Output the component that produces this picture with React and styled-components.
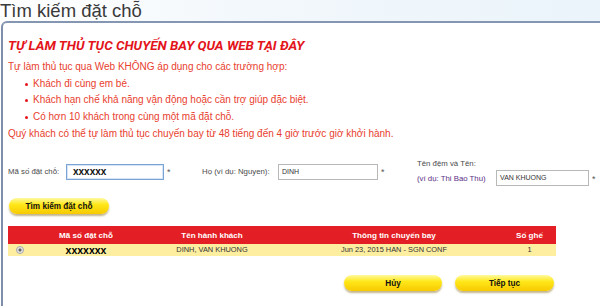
import styled, { createGlobalStyle } from "styled-components";

const GlobalStyle = createGlobalStyle`
  html, body {
    margin: 0;
    padding: 0;
    background: #ffffff;
  }
  body {
    font-family: "Liberation Sans", Arial, sans-serif;
  }
`;

const Page = styled.div`
  width: 600px;
  height: 306px;
  overflow: hidden;
  background: #ffffff;
`;

const TopBar = styled.div`
  height: 21px;
  background: linear-gradient(to right, #ffffff 0%, #f3f8fc 40%, #eaf4fa 100%);
  display: flex;
  align-items: flex-end;
`;

const PageTitle = styled.h1`
  margin: 0;
  font-family: "Liberation Sans", Arial, sans-serif;
  font-weight: normal;
  font-size: 18.5px;
  line-height: 21px;
  color: #3a3a3a;
  white-space: nowrap;
`;

const Panel = styled.div`
  margin-left: 1px;
  width: 640px;
  height: 300px;
  border-left: 2px solid #7d8fab;
  border-top: 2px solid #8596b2;
  border-top-left-radius: 6px;
  padding: 13px 0 0 5px;
  box-sizing: border-box;
`;

const RedTitle = styled.h2`
  margin: 0;
  font-family: Roboto, "Liberation Sans", sans-serif;
  font-style: italic;
  font-weight: bold;
  font-size: 13.4px;
  line-height: 20px;
  color: #e3141b;
  white-space: nowrap;
`;

const Notice = styled.div`
  margin-top: 3px;
  font-size: 10px;
  line-height: 16.7px;
  color: #e8402e;
  white-space: nowrap;
`;

const Bullets = styled.ul`
  margin: 0;
  padding: 0 0 0 17px;
  list-style: none;
`;

const Bullet = styled.li`
  &::before {
    content: "";
    display: inline-block;
    width: 3px;
    height: 3px;
    background: #e3141b;
    border-radius: 50%;
    margin-right: 5px;
    vertical-align: middle;
  }
`;

const FormRow = styled.div`
  margin-top: 13px;
  display: flex;
  align-items: flex-start;
  height: 36px;
`;

const Field = styled.div`
  display: flex;
  align-items: ${(p) => (p.$stack ? "flex-end" : "center")};
  margin-top: ${(p) => p.$top || 0}px;
  width: ${(p) => (p.$w ? `${p.$w}px` : "auto")};
  flex: none;
`;

const Label = styled.div`
  width: ${(p) => p.$w}px;
  flex: none;
  font-size: 7.8px;
  line-height: 15px;
  color: #4a4a4a;
  white-space: nowrap;
`;

const Hint = styled.span`
  color: #5b2f86;
`;

const Input = styled.div`
  width: ${(p) => p.$w}px;
  height: 16px;
  flex: none;
  box-sizing: border-box;
  border: 1px solid ${(p) => (p.$focus ? "#7aa3d6" : "#b8b8b8")};
  box-shadow: ${(p) => (p.$focus ? "inset 0 0 0 1px #d6e4f5" : "none")};
  background: #fff;
  padding-left: ${(p) => (p.$bold ? 6 : 3)}px;
  font-size: ${(p) => (p.$bold ? "10px" : "7px")};
  font-weight: ${(p) => (p.$bold ? "bold" : "normal")};
  line-height: 14px;
  color: ${(p) => (p.$bold ? "#111" : "#333")};
  white-space: nowrap;
  overflow: hidden;
`;

const Star = styled.span`
  font-size: 9px;
  color: #555;
  margin-left: 3px;
  line-height: 14px;
`;

const YellowButton = styled.button`
  width: ${(p) => p.$w || 99}px;
  height: 16px;
  padding: 0;
  border: none;
  border-radius: 8px;
  background: linear-gradient(to bottom, #fff9a0 0%, #ffe81a 40%, #f7c900 100%);
  box-shadow: 0 2px 2px rgba(120, 90, 0, 0.45);
  font-family: "Liberation Sans", Arial, sans-serif;
  font-size: 8.2px;
  font-weight: bold;
  color: #111;
  cursor: pointer;
`;

const SearchWrap = styled.div`
  margin-top: 3px;
  margin-left: 1px;
`;

const Table = styled.table`
  margin-top: 12px;
  width: 548px;
  border-collapse: collapse;
  font-family: "Liberation Sans", Arial, sans-serif;
`;

const HeadCell = styled.th`
  background: #e31e24;
  color: #fff;
  font-weight: bold;
  font-size: 8.1px;
  height: 18px;
  padding: 0;
  text-align: center;
  width: ${(p) => p.$w}px;
  white-space: nowrap;
`;

const Cell = styled.td`
  background: #fdeea0;
  height: 12px;
  padding: 0;
  text-align: ${(p) => p.$align || "center"};
  color: ${(p) => (p.$bold ? "#000" : "#333")};
  font-weight: ${(p) => (p.$bold ? "bold" : "normal")};
  font-size: ${(p) => (p.$bold ? "10.5px" : "7.4px")};
  line-height: 12px;
  white-space: nowrap;
`;

const Radio = styled.span`
  display: inline-block;
  width: 6px;
  height: 6px;
  border-radius: 50%;
  border: 1px solid #a9a9a9;
  background: radial-gradient(circle, #666 0 1.3px, #e6e6e6 1.8px);
  vertical-align: middle;
  margin-left: 8px;
`;

const Actions = styled.div`
  width: 548px;
  margin-top: 19px;
  display: flex;
  justify-content: flex-end;
  gap: 13px;
  padding-right: 2px;
  box-sizing: border-box;
`;

export default function App() {
  return (
    <Page>
      <GlobalStyle />
      <TopBar>
        <PageTitle>Tìm kiếm đặt chỗ</PageTitle>
      </TopBar>
      <Panel>
        <RedTitle>TỰ LÀM THỦ TỤC CHUYẾN BAY QUA WEB TẠI ĐÂY</RedTitle>
        <Notice>
          <div>Tự làm thủ tục qua Web KHÔNG áp dụng cho các trường hợp:</div>
          <Bullets>
            <Bullet>Khách đi cùng em bé.</Bullet>
            <Bullet>Khách hạn chế khả năng vận động hoặc cần trợ giúp đặc biệt.</Bullet>
            <Bullet>Có hơn 10 khách trong cùng một mã đặt chỗ.</Bullet>
          </Bullets>
          <div>Quý khách có thể tự làm thủ tục chuyến bay từ 48 tiếng đến 4 giờ trước giờ khởi hành.</div>
        </Notice>

        <FormRow>
          <Field $top={8} $w={194}>
            <Label $w={58}>Mã số đặt chỗ:</Label>
            <Input $w={98} $focus $bold>xxxxxx</Input>
            <Star>*</Star>
          </Field>
          <Field $top={8} $w={215}>
            <Label $w={76}>Họ (ví dụ: Nguyen):</Label>
            <Input $w={100}>DINH</Input>
            <Star>*</Star>
          </Field>
          <Field $stack>
            <Label $w={79}>
              Tên đệm và Tên:
              <br />
              <Hint>(ví dụ: Thi Bao Thu)</Hint>
            </Label>
            <Input $w={93}>VAN KHUONG</Input>
            <Star>*</Star>
          </Field>
        </FormRow>

        <SearchWrap>
          <YellowButton $w={100}>Tìm kiếm đặt chỗ</YellowButton>
        </SearchWrap>

        <Table>
          <thead>
            <tr>
              <HeadCell $w={25}></HeadCell>
              <HeadCell $w={106}>Mã số đặt chỗ</HeadCell>
              <HeadCell $w={146}>Tên hành khách</HeadCell>
              <HeadCell $w={218}>Thông tin chuyến bay</HeadCell>
              <HeadCell $w={53}>Số ghế</HeadCell>
            </tr>
          </thead>
          <tbody>
            <tr>
              <Cell $align="left">
                <Radio />
              </Cell>
              <Cell $bold>xxxxxxx</Cell>
              <Cell>DINH, VAN KHUONG</Cell>
              <Cell>Jun 23, 2015 HAN - SGN CONF</Cell>
              <Cell>1</Cell>
            </tr>
          </tbody>
        </Table>

        <Actions>
          <YellowButton $w={98}>Hủy</YellowButton>
          <YellowButton $w={99}>Tiếp tục</YellowButton>
        </Actions>
      </Panel>
    </Page>
  );
}
